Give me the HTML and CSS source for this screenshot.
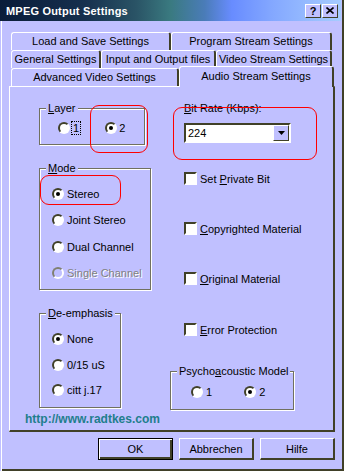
FILE: index.html
```html
<!DOCTYPE html>
<html>
<head>
  <title>MPEG Output Settings</title>
  <link rel="stylesheet" href="styles.css">
</head>
<body>
  <div class="window">
    <div class="titlebar">
      <span class="title">MPEG Output Settings</span>
      <div class="caption-btns">
        <span class="cbtn">?</span>
        <span class="cbtn">
          <svg width="8" height="7" viewBox="0 0 8 7"><path d="M0.5 0.5 L7.5 6.5 M7.5 0.5 L0.5 6.5" stroke="#000" stroke-width="1.6"/></svg>
        </span>
      </div>
    </div>

    <div class="tabs">
      <div class="tab-row">
        <div class="tab" style="width:160px">Load and Save Settings</div>
        <div class="tab" style="width:161px">Program Stream Settings</div>
      </div>
      <div class="tab-row">
        <div class="tab" style="width:90px">General Settings</div>
        <div class="tab" style="width:115px">Input and Output files</div>
        <div class="tab" style="width:116px">Video Stream Settings</div>
      </div>
      <div class="tab-row">
        <div class="tab" style="width:168px">Advanced Video Settings</div>
        <div class="tab selected" style="width:155px">Audio Stream Settings</div>
      </div>
    </div>

    <div class="panel">
      <div class="col-left">
        <div class="group layer">
          <div class="legend"><u>L</u>ayer</div>
          <div class="layer-opts">
            <div class="opt"><span class="radio"></span><span class="focus">1</span></div>
            <div class="opt opt-2"><span class="radio checked"></span><span>2</span></div>
          </div>
        </div>

        <div class="group mode">
          <div class="legend"><u>M</u>ode</div>
          <div class="opts">
            <div class="opt"><span class="radio checked"></span><span>Stereo</span></div>
            <div class="opt"><span class="radio"></span><span>Joint Stereo</span></div>
            <div class="opt"><span class="radio"></span><span>Dual Channel</span></div>
            <div class="opt disabled"><span class="radio"></span><span>Single Channel</span></div>
          </div>
        </div>

        <div class="group deemph">
          <div class="legend"><u>D</u>e-emphasis</div>
          <div class="opts">
            <div class="opt"><span class="radio checked"></span><span>None</span></div>
            <div class="opt"><span class="radio"></span><span>0/15 uS</span></div>
            <div class="opt"><span class="radio"></span><span>citt j.17</span></div>
          </div>
        </div>

        <div class="url">http://www.radtkes.com</div>
      </div>

      <div class="col-right">
        <div class="bitrate-label"><u>B</u>it Rate (Kbps):</div>
        <div class="combo">
          <div class="combo-val">224</div>
          <div class="combo-btn">
            <svg width="7" height="4" viewBox="0 0 7 4"><polygon points="0,0 7,0 3.5,4" fill="#000"/></svg>
          </div>
        </div>

        <div class="check-row first"><span class="check"></span><span>Set <u>P</u>rivate Bit</span></div>
        <div class="check-row"><span class="check"></span><span><u>C</u>opyrighted Material</span></div>
        <div class="check-row"><span class="check"></span><span><u>O</u>riginal Material</span></div>
        <div class="check-row last"><span class="check"></span><span><u>E</u>rror Protection</span></div>

        <div class="group psycho">
          <div class="legend">Psycho<u>a</u>coustic Model</div>
          <div class="psycho-opts">
            <div class="opt"><span class="radio"></span><span>1</span></div>
            <div class="opt opt-2"><span class="radio checked"></span><span>2</span></div>
          </div>
        </div>
      </div>
    </div>

    <div class="buttons">
      <div class="btn default">OK</div>
      <div class="btn">Abbrechen</div>
      <div class="btn">Hilfe</div>
    </div>

    <!-- red annotation marks -->
    <div class="mark mark-layer"></div>
    <div class="mark mark-stereo"></div>
    <div class="mark mark-bitrate"></div>
  </div>
</body>
</html>
```

FILE: styles.css
```css
body {
  margin: 0;
  font-family: "Liberation Sans", Arial, sans-serif;
  font-size: 11px;
  color: #000;
  background: #c0c0ff;
}

.window {
  position: relative;
  width: 344px;
  height: 471px;
  box-sizing: border-box;
  background: #c0c0ff;
  box-shadow: inset 1px 0 #c0c0ff, inset 2px 0 #fff, inset -2px -2px #404028;
  overflow: hidden;
}

/* title bar */
.titlebar {
  height: 21px;
  margin-right: 3px;
  padding-left: 6px;
  display: flex;
  align-items: center;
  justify-content: space-between;
  background: linear-gradient(to right, #0a1c3a 0%, #16304e 25%, #2a5466 40%, #3a7a80 50%, #4a7cb8 60%, #688cff 68%, #84a8ff 80%, #a6ccff 100%);
}

.title {
  color: #fff;
  font-weight: bold;
  letter-spacing: 0.2px;
}

.caption-btns {
  display: flex;
  gap: 1px;
  margin-right: 3px;
}

.cbtn {
  width: 16px;
  height: 14px;
  box-sizing: border-box;
  background: #c0c0ff;
  border: 1px solid;
  border-color: #fff #404028 #404028 #fff;
  display: flex;
  align-items: center;
  justify-content: center;
  font-weight: bold;
  font-size: 11px;
  line-height: 12px;
}

/* tabs */
.tabs {
  padding: 11px 0 0 11px;
}

.tab-row {
  display: flex;
  height: 18px;
}

.tab {
  box-sizing: border-box;
  height: 18px;
  border-top: 1px solid #fff;
  border-left: 1px solid #fff;
  border-right: 2px solid #404028;
  border-radius: 3px 3px 0 0;
  text-align: center;
  line-height: 17px;
  white-space: nowrap;
}

.tab.selected {
  position: relative;
  z-index: 2;
  margin-top: -2px;
  height: 21px;
  background: #c0c0ff;
  line-height: 18px;
}

/* panel */
.panel {
  position: relative;
  display: flex;
  margin-left: 9px;
  width: 326px;
  height: 346px;
  box-sizing: border-box;
  border-top: 1px solid #fff;
  border-left: 1px solid #fff;
  border-right: 2px solid #404028;
  border-bottom: 2px solid #404028;
}

.col-left {
  width: 160px;
  box-sizing: border-box;
  padding-left: 29px;
}

.col-right {
  flex: 1;
}

.group {
  box-sizing: border-box;
  border: 1px solid #707060;
  box-shadow: inset 1px 1px #fff, 1px 1px #fff;
}

.legend {
  width: fit-content;
  height: 13px;
  line-height: 13px;
  margin: -7px 0 0 6px;
  padding: 0 2px;
  background: #c0c0ff;
}

.layer {
  margin-top: 21px;
  width: 106px;
  height: 37px;
}

.layer-opts {
  display: flex;
  padding: 6px 0 0 18px;
}

.layer-opts .radio {
  margin-right: 2px;
}

.layer-opts .opt-2 {
  margin-left: 25px;
}

.focus {
  padding: 0 1px;
  outline: 1px dotted #000;
}

.mode {
  margin-top: 23px;
  width: 112px;
  height: 122px;
}

.deemph {
  margin-top: 23px;
  width: 82px;
  height: 95px;
}

.opts {
  display: flex;
  flex-direction: column;
  gap: 13.5px;
  padding: 12px 0 0 12px;
}

.deemph .opts {
  gap: 12.5px;
  padding-top: 12.5px;
}

.opt {
  display: flex;
  align-items: center;
  height: 13px;
  white-space: nowrap;
}

.radio {
  position: relative;
  width: 12px;
  height: 12px;
  box-sizing: border-box;
  border-radius: 50%;
  border: 2px solid;
  border-color: #404028 #fff #fff #404028;
  background: #fff;
  margin-right: 3px;
  flex-shrink: 0;
}

.radio.checked::after {
  content: "";
  position: absolute;
  left: 2px;
  top: 2px;
  width: 4px;
  height: 4px;
  border-radius: 50%;
  background: #000;
}

.disabled {
  color: #808080;
  text-shadow: 1px 1px #fff;
}

.disabled .radio {
  background: #c0c0ff;
  border-color: #808070 #fff #fff #808070;
}

.url {
  margin: 4px 0 0 -14px;
  line-height: 14px;
  font-size: 12px;
  font-weight: bold;
  color: #1e7e8c;
  white-space: nowrap;
}

/* right column */
.bitrate-label {
  margin: 15px 0 0 14px;
  line-height: 13px;
}

.combo {
  display: flex;
  margin: 8px 0 0 14px;
  width: 107px;
  height: 20px;
  box-sizing: border-box;
  border: 2px solid;
  border-color: #404028 #fff #fff #404028;
  background: #fff;
}

.combo-val {
  flex: 1;
  padding-left: 2px;
  line-height: 16px;
}

.combo-btn {
  width: 16px;
  height: 16px;
  box-sizing: border-box;
  background: #c0c0ff;
  border: 1px solid;
  border-color: #fff #404028 #404028 #fff;
  display: flex;
  align-items: center;
  justify-content: center;
}

.check-row {
  display: flex;
  align-items: center;
  height: 13px;
  margin: 37px 0 0 14px;
  white-space: nowrap;
}

.check-row.first {
  margin-top: 29px;
}

.check-row.last {
  margin-top: 38px;
}

.check {
  width: 13px;
  height: 13px;
  box-sizing: border-box;
  border: 2px solid;
  border-color: #404028 #fff #fff #404028;
  background: #fff;
  margin-right: 3px;
}

.psycho {
  margin-top: 35px;
  width: 124px;
  height: 39px;
}

.psycho-opts {
  display: flex;
  padding: 7.5px 0 0 20px;
}

.psycho-opts .opt-2 {
  margin-left: 32px;
}

/* buttons */
.buttons {
  display: flex;
  gap: 6px;
  margin-top: 6px;
  padding-left: 98px;
}

.btn {
  width: 75px;
  height: 22px;
  box-sizing: border-box;
  border-top: 1px solid #fff;
  border-left: 1px solid #fff;
  border-right: 2px solid #404028;
  border-bottom: 2px solid #404028;
  display: flex;
  align-items: center;
  justify-content: center;
}

.btn.default {
  border: 1px solid #000;
  box-shadow: inset 1px 1px #fff, inset -2px -2px #404028;
}

/* annotation marks */
.mark {
  position: absolute;
  box-sizing: border-box;
  border: 1px solid #f00;
  border-radius: 9px;
}

.mark-layer {
  left: 90px;
  top: 105px;
  width: 58px;
  height: 48px;
}

.mark-stereo {
  left: 40px;
  top: 175px;
  width: 81px;
  height: 30px;
}

.mark-bitrate {
  left: 173px;
  top: 107px;
  width: 144px;
  height: 53px;
}
```
